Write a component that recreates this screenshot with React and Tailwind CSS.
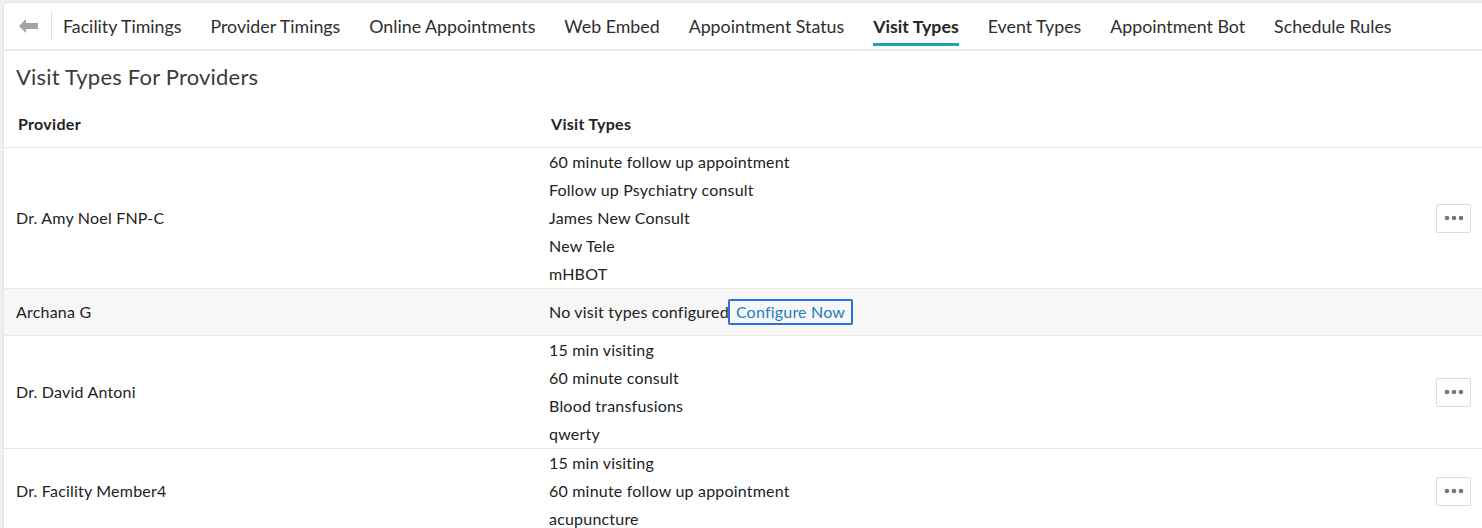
const TABS = [
  'Facility Timings',
  'Provider Timings',
  'Online Appointments',
  'Web Embed',
  'Appointment Status',
  'Visit Types',
  'Event Types',
  'Appointment Bot',
  'Schedule Rules',
];

const PROVIDERS = [
  {
    name: 'Dr. Amy Noel FNP-C',
    visitTypes: ['60 minute follow up appointment', 'Follow up Psychiatry consult', 'James New Consult', 'New Tele', 'mHBOT'],
  },
  { name: 'Archana G', visitTypes: [] },
  {
    name: 'Dr. David Antoni',
    visitTypes: ['15 min visiting', '60 minute consult', 'Blood transfusions', 'qwerty'],
  },
  {
    name: 'Dr. Facility Member4',
    visitTypes: ['15 min visiting', '60 minute follow up appointment', 'acupuncture'],
  },
];

function BackArrow() {
  return (
    <svg width="19" height="14" viewBox="0 0 19 14" className="text-[#a3a3a3]">
      <path d="M0 7 L7 0 L7 4 L19 4 L19 10 L7 10 L7 14 Z" fill="currentColor" />
    </svg>
  );
}

function DotsButton() {
  return (
    <button className="w-[35px] h-[29px] flex items-center justify-center bg-white border border-[#dcdcdc] rounded-[2px]">
      <svg width="20" height="6" viewBox="0 0 20 6">
        <circle cx="3" cy="3" r="2.3" fill="#777" />
        <circle cx="10" cy="3" r="2.3" fill="#777" />
        <circle cx="17" cy="3" r="2.3" fill="#777" />
      </svg>
    </button>
  );
}

function ProviderRow({ provider }) {
  const empty = provider.visitTypes.length === 0;
  return (
    <div
      className={
        'grid grid-cols-[545px_1fr_auto] border-b border-[#e8e8e8] ' +
        (empty ? 'bg-[#f7f7f7]' : 'bg-white')
      }
    >
      <div className="flex items-center pl-[12px]">{provider.name}</div>
      {empty ? (
        <div className="h-[46px] flex items-center">
          <span className="w-[179px] overflow-hidden whitespace-nowrap">No visit types configured</span>
          <button className="h-[26px] w-[125px] border-2 border-[#2f6fd8] rounded-[2px] text-[#1b80c4] leading-none">
            Configure Now
          </button>
        </div>
      ) : (
        <div className="flex flex-col">
          {provider.visitTypes.map(v => (
            <div key={v} className="h-[28px] flex items-center">{v}</div>
          ))}
        </div>
      )}
      <div className="flex items-center pr-[11px]">
        {!empty && <DotsButton />}
      </div>
    </div>
  );
}

export default function App() {
  return (
    <div className="min-h-screen bg-[#eef0f3] pt-[2px] pl-[3px] font-['Lato','Open_Sans',sans-serif] text-[16px] tracking-[0.2px] text-[#222]">
      <div className="min-h-[526px] bg-white border-l border-t border-[#e2e2e2] rounded-tl-[5px]">
        <div className="h-[48px] flex items-stretch border-b-2 border-[#ebebeb]">
          <div className="flex items-center pl-[15px] pr-[13px]">
            <BackArrow />
          </div>
          <div className="self-center w-px h-[30px] bg-[#dedede]" />
          <nav className="flex items-stretch ml-[11px] gap-[29px] text-[17.8px] tracking-normal text-[#2e2e2e]">
            {TABS.map(t => {
              const active = t === 'Visit Types';
              return (
                <div key={t} className="relative flex items-center">
                  <span className={active ? 'font-bold text-[#262626]' : ''}>{t}</span>
                  {active && <span className="absolute left-0 right-0 bottom-[3px] h-[3px] bg-[#1ea5ae]" />}
                </div>
              );
            })}
          </nav>
        </div>

        <div className="h-[50px] flex items-center pl-[12px] text-[22px] text-[#3b3b3b]">
          Visit Types For Providers
        </div>

        <div className="grid grid-cols-[545px_1fr] h-[47px] items-center border-b border-[#e8e8e8] font-bold tracking-[0.3px]">
          <div className="pl-[14px]">Provider</div>
          <div className="pl-[2px]">Visit Types</div>
        </div>

        {PROVIDERS.map(p => (
          <ProviderRow key={p.name} provider={p} />
        ))}
      </div>
    </div>
  );
}
